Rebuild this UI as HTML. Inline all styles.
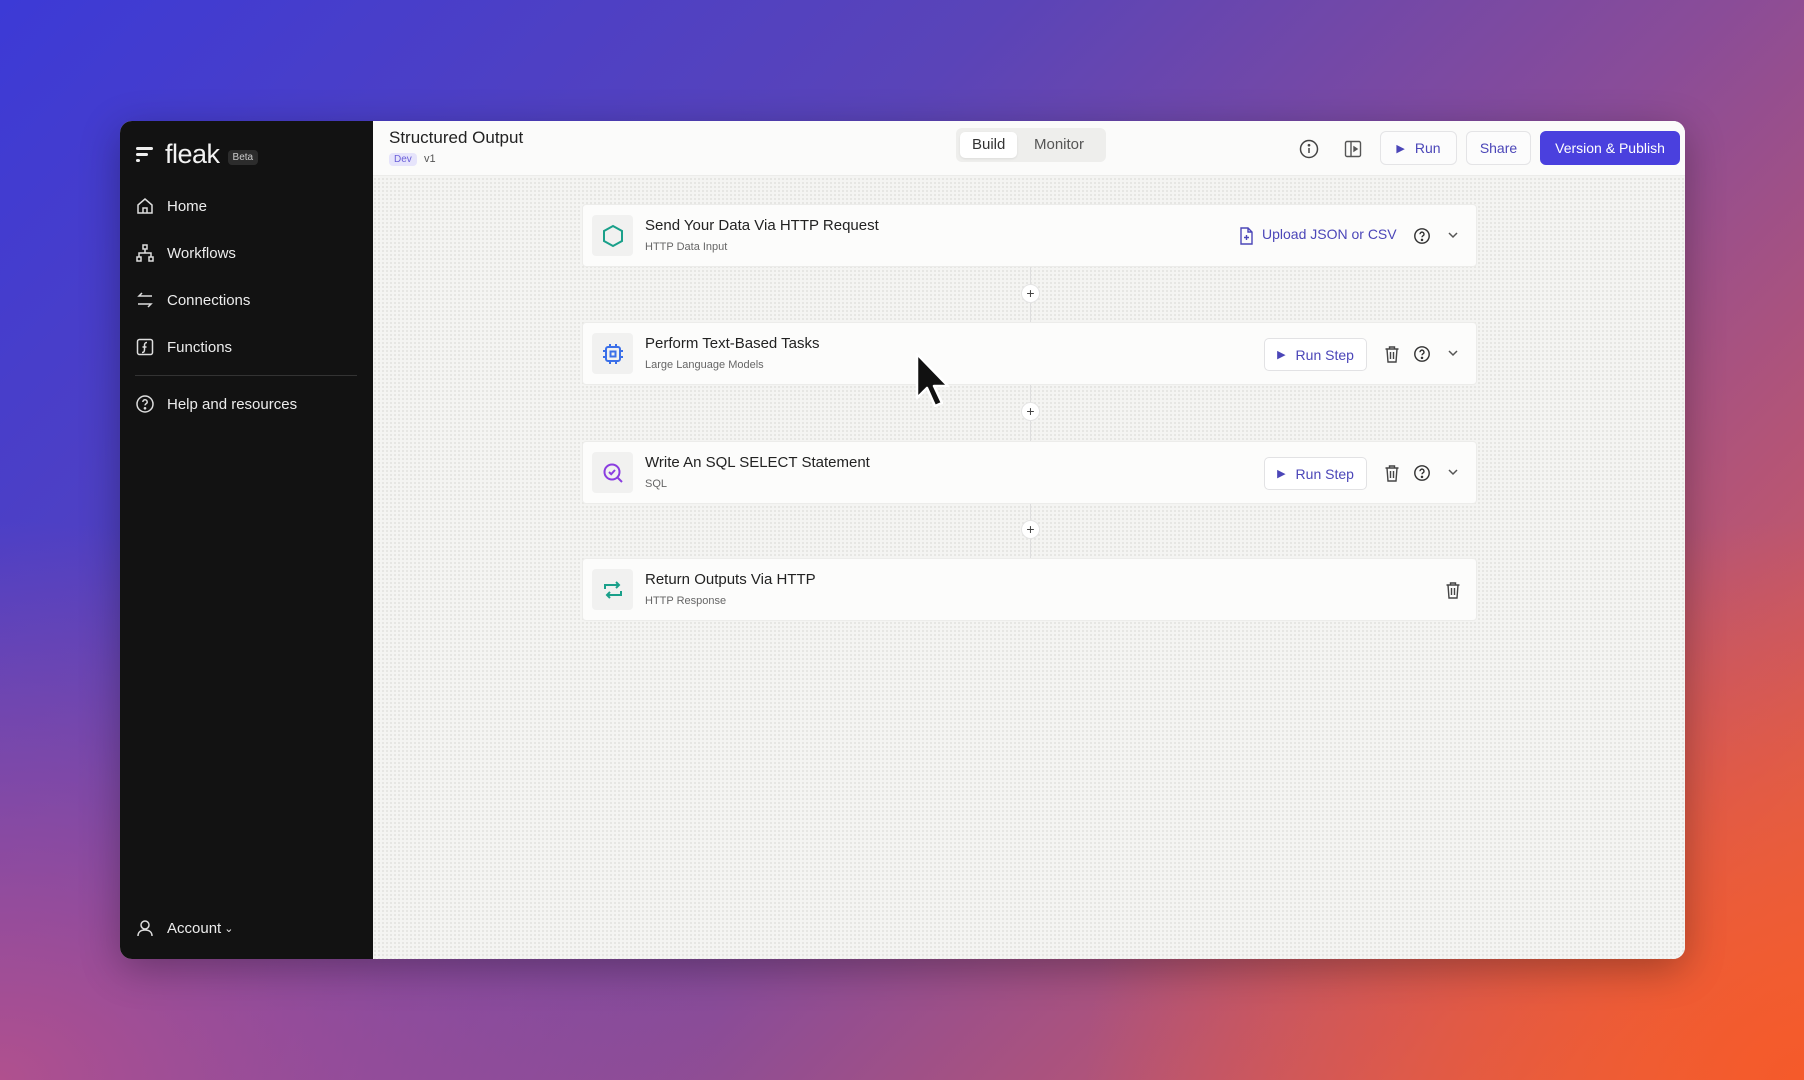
<!DOCTYPE html>
<html><head><meta charset="utf-8">
<style>
*{box-sizing:border-box;margin:0;padding:0}
body{width:1804px;height:1080px;overflow:hidden;font-family:"Liberation Sans",sans-serif;position:relative;
background:
radial-gradient(ellipse 900px 700px at 1804px 1080px,#f55a2a 0%,rgba(240,90,50,0.6) 40%,rgba(200,80,100,0) 80%),
radial-gradient(ellipse 900px 700px at 0px 1080px,#b0508e 0%,rgba(170,80,140,0) 80%),
linear-gradient(135deg,#3c3ad6 0%,#5a44b8 35%,#8a4c98 60%,#c65868 85%,#f06a3a 100%);}
.win{position:absolute;left:120px;top:121px;width:1565px;height:838px;border-radius:12px;overflow:hidden;background:#f5f5f3;box-shadow:0 10px 40px rgba(0,0,0,.3)}
.side{position:absolute;left:0;top:0;width:253px;height:100%;background:#121212;color:#e8e8e8}
.logo{position:absolute;left:15px;top:18px;display:flex;align-items:center}
.logo .t{font-size:27px;color:#f2f2f2;margin-left:10px;letter-spacing:-0.5px}
.beta{margin-left:8px;margin-top:6px;background:#2c2c2c;color:#ccc;font-size:10px;padding:2px 5px;border-radius:4px}
.nav{position:absolute;left:15px;display:flex;align-items:center;font-size:15px;color:#ececec}
.nav svg{width:20px;height:20px;margin-right:12px}
.div{position:absolute;left:15px;width:222px;top:254px;height:1px;background:#333}
.main{position:absolute;left:253px;top:0;right:0;bottom:0;background-color:#f4f4f2;background-image:radial-gradient(#e2e2de 0.8px,transparent 0.9px);background-size:4px 4px}
.hdr{position:absolute;left:0;top:0;right:0;height:55px;background:#fbfbfa;border-bottom:1px solid #ececea}
.ttl{position:absolute;left:16px;top:7px;font-size:17px;color:#222}
.dev{position:absolute;left:16px;top:32px;background:#e6e4fb;color:#6a5fd8;font-size:10px;padding:1px 5px;border-radius:4px}
.v1{position:absolute;left:51px;top:32px;font-size:11px;color:#555}
.tabs{position:absolute;left:583px;top:7px;width:150px;height:34px;background:#eeeeec;border-radius:6px}
.tab{position:absolute;top:4px;height:26px;line-height:26px;font-size:15px;color:#333;padding:0 12px}
.btn{position:absolute;top:10px;height:34px;border:1px solid #e4e4e6;border-radius:6px;background:#fcfcfc;color:#4b46b8;font-size:14px;display:flex;align-items:center;justify-content:center}
.card{position:absolute;left:209px;width:895px;height:63px;background:#fcfcfb;border:1px solid #ececea;border-radius:4px}
.ib{position:absolute;left:9px;top:10px;width:41px;height:41px;background:#f1f1f0;border-radius:4px;display:flex;align-items:center;justify-content:center}
.ct{position:absolute;left:62px;top:12px;font-size:15px;color:#222}
.cs{position:absolute;left:62px;top:36px;font-size:11px;color:#666}
.line{position:absolute;left:657px;width:1px;background:#ddd}
.plus{position:absolute;left:648px;width:19px;height:19px;border-radius:50%;background:#fff;border:1px solid #e4e4e4;font-size:14px;line-height:16px;text-align:center;color:#444}
.rs{position:absolute;left:681px;top:15px;width:103px;height:33px;border:1px solid #e2e2e4;border-radius:5px;background:#fff;color:#4b46b8;font-size:14px;display:flex;align-items:center;justify-content:center;gap:10px}
.ic{position:absolute;top:22px}
</style></head><body>
<div class="win">
 <div class="side">
  <div class="logo">
   <svg width="20" height="18" viewBox="0 0 20 18"><rect x="1" y="1" width="17" height="3" rx="1.5" fill="#eee"/><rect x="1" y="7" width="12" height="3" rx="1.5" fill="#eee"/><rect x="1" y="13" width="4" height="3" rx="1.5" fill="#eee"/></svg>
   <span class="t">fleak</span><span class="beta">Beta</span>
  </div>
  <div class="nav" style="top:75px"><svg viewBox="0 0 20 20" fill="none" stroke="#ddd" stroke-width="1.5"><path d="M3 9l7-6 7 6v8H3z M8 17v-5h4v5"/></svg>Home</div>
  <div class="nav" style="top:122px"><svg viewBox="0 0 20 20" fill="none" stroke="#ddd" stroke-width="1.5"><rect x="8" y="2" width="4" height="4"/><rect x="2" y="14" width="4" height="4"/><rect x="14" y="14" width="4" height="4"/><path d="M10 6v4M4 14v-4h12v4"/></svg>Workflows</div>
  <div class="nav" style="top:169px"><svg viewBox="0 0 20 20" fill="none" stroke="#ddd" stroke-width="1.5"><path d="M17 6H4l3-3M3 14h13l-3 3"/></svg>Connections</div>
  <div class="nav" style="top:216px"><svg viewBox="0 0 20 20" fill="none" stroke="#ddd" stroke-width="1.5"><rect x="2.5" y="2.5" width="15" height="15" rx="2"/><path d="M12 5.5c-2 0-2.5 1-2.5 3v4c0 2-.5 3-2.5 3M7.5 10h4"/></svg>Functions</div>
  <div class="div"></div>
  <div class="nav" style="top:273px"><svg viewBox="0 0 20 20" fill="none" stroke="#ddd" stroke-width="1.5"><circle cx="10" cy="10" r="8"/><path d="M7.8 8a2.2 2.2 0 114 1.2c-.8.6-1.8 1-1.8 2.2"/><circle cx="10" cy="14.3" r=".6" fill="#ddd"/></svg>Help and resources</div>
  <div class="nav" style="top:797px"><svg viewBox="0 0 20 20" fill="none" stroke="#ddd" stroke-width="1.5"><circle cx="10" cy="7" r="4"/><path d="M3 18c0-4 3-6 7-6s7 2 7 6"/></svg>Account <span style="font-size:11px;margin-left:3px">&#8964;</span></div>
 </div>
 <div class="main">
  <div class="hdr">
   <div class="ttl">Structured Output</div>
   <div class="dev">Dev</div><div class="v1">v1</div>
   <div class="tabs"><div class="tab" style="left:4px;background:#fff;border-radius:5px;box-shadow:0 1px 2px rgba(0,0,0,.08)">Build</div><div class="tab" style="left:66px;color:#555">Monitor</div></div>
   <svg style="position:absolute;left:926px;top:18px" width="20" height="20" viewBox="0 0 20 20" fill="none" stroke="#444" stroke-width="1.5"><circle cx="10" cy="10" r="8.5"/><path d="M10 9v5"/><circle cx="10" cy="6.2" r=".6" fill="#444"/></svg>
   <svg style="position:absolute;left:970px;top:18px" width="20" height="20" viewBox="0 0 20 20" fill="none" stroke="#555" stroke-width="1.4"><rect x="2.5" y="2.5" width="15" height="15" rx="1.5"/><path d="M8 2.5v15"/><path d="M11 8l3 2-3 2z" fill="#555"/></svg>
   <div class="btn" style="left:1007px;width:77px"><span style="font-size:11px;margin-right:10px">&#9654;</span>Run</div>
   <div class="btn" style="left:1093px;width:65px">Share</div>
   <div class="btn" style="left:1167px;width:140px;background:#4a40de;border-color:#4a40de;color:#fff">Version &amp; Publish</div>
  </div>

  <div class="line" style="top:146px;height:55px"></div>
  <div class="line" style="top:264px;height:56px"></div>
  <div class="line" style="top:383px;height:54px"></div>

  <div class="card" style="top:83px">
   <div class="ib"><svg width="24" height="24" viewBox="0 0 24 24" fill="none" stroke="#1aa08a" stroke-width="2"><path d="M12 2l9 5v10l-9 5-9-5V7z"/></svg></div>
   <div class="ct">Send Your Data Via HTTP Request</div><div class="cs">HTTP Data Input</div>
   <svg class="ic" style="left:655px;top:22px" width="16" height="18" viewBox="0 0 16 18" fill="none" stroke="#4b46b8" stroke-width="1.4"><path d="M3 1h7l4 4v12H3z M10 1v4h4 M8.5 8v5 M6 10.5h5"/></svg>
   <div style="position:absolute;left:679px;top:21px;color:#4b46b8;font-size:14px">Upload JSON or CSV</div>
   <svg class="ic" style="left:830px;top:22px" width="18" height="18" viewBox="0 0 20 20" fill="none" stroke="#333" stroke-width="1.6"><circle cx="10" cy="10" r="8"/><path d="M7.8 8a2.2 2.2 0 114 1.2c-.8.6-1.8 1-1.8 2.2"/><circle cx="10" cy="14.3" r=".6" fill="#333"/></svg>
   <svg class="ic" style="left:864px;top:25px" width="12" height="10" viewBox="0 0 12 10" fill="none" stroke="#555" stroke-width="1.5"><path d="M2 3l4 4 4-4"/></svg>
  </div>
  <div class="plus" style="top:163px">+</div>

  <div class="card" style="top:201px">
   <div class="ib"><svg width="24" height="24" viewBox="0 0 24 24" fill="none" stroke="#3a6fe8" stroke-width="2"><rect x="5" y="5" width="14" height="14" rx="2"/><rect x="9.5" y="9.5" width="5" height="5"/><path d="M9 2v3M15 2v3M9 19v3M15 19v3M2 9h3M2 15h3M19 9h3M19 15h3"/></svg></div>
   <div class="ct">Perform Text-Based Tasks</div><div class="cs">Large Language Models</div>
   <div class="rs"><span style="font-size:11px">&#9654;</span>Run Step</div>
   <svg class="ic" style="left:801px;top:22px" width="16" height="18" viewBox="0 0 16 18" fill="none" stroke="#444" stroke-width="1.4"><path d="M1.5 4h13M5.5 4V2h5v2M3 4l1 13h8l1-13M6.5 7v7M9.5 7v7"/></svg>
   <svg class="ic" style="left:830px;top:22px" width="18" height="18" viewBox="0 0 20 20" fill="none" stroke="#333" stroke-width="1.6"><circle cx="10" cy="10" r="8"/><path d="M7.8 8a2.2 2.2 0 114 1.2c-.8.6-1.8 1-1.8 2.2"/><circle cx="10" cy="14.3" r=".6" fill="#333"/></svg>
   <svg class="ic" style="left:864px;top:25px" width="12" height="10" viewBox="0 0 12 10" fill="none" stroke="#555" stroke-width="1.5"><path d="M2 3l4 4 4-4"/></svg>
  </div>
  <div class="plus" style="top:281px">+</div>

  <div class="card" style="top:320px">
   <div class="ib"><svg width="24" height="24" viewBox="0 0 24 24" fill="none" stroke="#8a3de0" stroke-width="2"><circle cx="11" cy="11" r="7.5"/><path d="M16.5 16.5L21 21M8 11l2.2 2.2L14 9"/></svg></div>
   <div class="ct">Write An SQL SELECT Statement</div><div class="cs">SQL</div>
   <div class="rs"><span style="font-size:11px">&#9654;</span>Run Step</div>
   <svg class="ic" style="left:801px;top:22px" width="16" height="18" viewBox="0 0 16 18" fill="none" stroke="#444" stroke-width="1.4"><path d="M1.5 4h13M5.5 4V2h5v2M3 4l1 13h8l1-13M6.5 7v7M9.5 7v7"/></svg>
   <svg class="ic" style="left:830px;top:22px" width="18" height="18" viewBox="0 0 20 20" fill="none" stroke="#333" stroke-width="1.6"><circle cx="10" cy="10" r="8"/><path d="M7.8 8a2.2 2.2 0 114 1.2c-.8.6-1.8 1-1.8 2.2"/><circle cx="10" cy="14.3" r=".6" fill="#333"/></svg>
   <svg class="ic" style="left:864px;top:25px" width="12" height="10" viewBox="0 0 12 10" fill="none" stroke="#555" stroke-width="1.5"><path d="M2 3l4 4 4-4"/></svg>
  </div>
  <div class="plus" style="top:399px">+</div>

  <div class="card" style="top:437px">
   <div class="ib"><svg width="24" height="24" viewBox="0 0 24 24" fill="none" stroke="#1aa08a" stroke-width="2"><path d="M4 11V7h14M15 4l3 3-3 3M20 13v4H6M9 20l-3-3 3-3"/></svg></div>
   <div class="ct">Return Outputs Via HTTP</div><div class="cs">HTTP Response</div>
   <svg class="ic" style="left:862px;top:22px" width="16" height="18" viewBox="0 0 16 18" fill="none" stroke="#444" stroke-width="1.4"><path d="M1.5 4h13M5.5 4V2h5v2M3 4l1 13h8l1-13M6.5 7v7M9.5 7v7"/></svg>
  </div>
 </div>
</div>
<svg style="position:absolute;left:914px;top:352px" width="42" height="60" viewBox="0 0 42 60"><path d="M3 2v44l10-10 8 18 7-3-8-17h14z" fill="#111" stroke="#fff" stroke-width="2.5" stroke-linejoin="round"/></svg>
</body></html>
